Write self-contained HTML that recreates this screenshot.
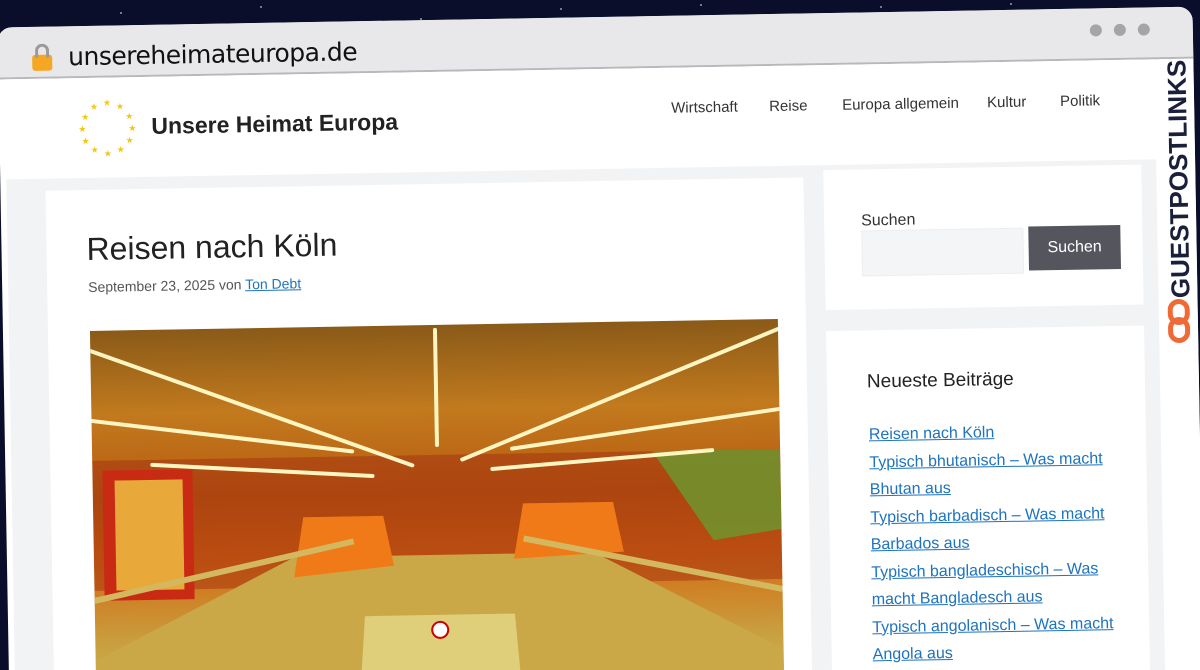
<!DOCTYPE html>
<html><head><meta charset="utf-8"><style>
html,body{margin:0;padding:0;width:1200px;height:670px;overflow:hidden;background:#0a0e2a;font-family:"Liberation Sans",sans-serif}
#root{position:relative;width:1200px;height:670px;overflow:hidden}
.star{position:absolute;width:2px;height:2px;background:#cfd6ff;border-radius:50%;opacity:.7}
#w{position:absolute;left:3px;top:17px;width:1195px;height:680px;transform:rotate(-1deg);transform-origin:600px 313px;background:#fff;border-radius:14px;overflow:hidden}
.abs{position:absolute}
a{color:#1e73be}
</style></head><body><div id="root">
<div class="star" style="left:120px;top:12px"></div><div class="star" style="left:260px;top:6px"></div><div class="star" style="left:420px;top:18px"></div><div class="star" style="left:560px;top:8px"></div><div class="star" style="left:700px;top:4px"></div><div class="star" style="left:880px;top:6px"></div><div class="star" style="left:1010px;top:3px"></div><div class="star" style="left:40px;top:30px"></div><div class="star" style="left:340px;top:22px"></div>
<div id="w">
 <div class="abs" style="left:0;top:0;width:1195px;height:50px;background:#e8e8ea;border-bottom:2px solid #b8b8bc"></div>
 <div class="abs" style="left:34px;top:28px;width:20px;height:16px;background:#f5a623;border-radius:3px"></div>
 <div class="abs" style="left:37px;top:17px;width:14px;height:14px;border:3px solid #9a9a9a;border-bottom:none;border-radius:8px 8px 0 0;box-sizing:border-box"></div>
 <div class="abs" style="left:70px;top:16px;font-size:25px;color:#111;font-family:'DejaVu Sans',sans-serif;letter-spacing:-.5px">unsereheimateuropa.de</div>
 <div class="abs" style="left:1092px;top:16px;width:12px;height:12px;border-radius:50%;background:#a5a5a8"></div>
 <div class="abs" style="left:1116px;top:16px;width:12px;height:12px;border-radius:50%;background:#a5a5a8"></div>
 <div class="abs" style="left:1140px;top:16px;width:12px;height:12px;border-radius:50%;background:#a5a5a8"></div>
 <div class="abs" style="left:6px;top:52px;width:1150px;height:700px;background:#f2f3f5"></div>
 <div class="abs" style="left:6px;top:52px;width:1150px;height:100px;background:#fff"></div>
 <svg class="abs" style="left:78px;top:72px" width="60" height="60" viewBox="0 0 60 60">
  <g fill="#f3c814" font-size="9" text-anchor="middle"><text x="30" y="8">★</text><text x="43" y="12">★</text><text x="52" y="22">★</text><text x="55" y="34">★</text><text x="52" y="46">★</text><text x="43" y="55">★</text><text x="30" y="59">★</text><text x="17" y="55">★</text><text x="8" y="46">★</text><text x="5" y="34">★</text><text x="8" y="22">★</text><text x="17" y="12">★</text></g></svg>
 <div class="abs" style="left:152px;top:88px;font-size:23px;font-weight:bold;color:#222">Unsere Heimat Europa</div>
 <div class="abs" style="left:672px;top:84px;font-size:15px;color:#333">Wirtschaft</div>
 <div class="abs" style="left:770px;top:84px;font-size:15px;color:#333">Reise</div>
 <div class="abs" style="left:843px;top:84px;font-size:15px;color:#333">Europa allgemein</div>
 <div class="abs" style="left:988px;top:84px;font-size:15px;color:#333">Kultur</div>
 <div class="abs" style="left:1061px;top:84px;font-size:15px;color:#333">Politik</div>
 <div class="abs" style="left:45px;top:164px;width:758px;height:600px;background:#fff"></div>
 <div class="abs" style="left:85px;top:205px;font-size:32px;color:#222">Reisen nach Köln</div>
 <div class="abs" style="left:86px;top:253px;font-size:14px;color:#555">September 23, 2025 von <a href="#">Ton Debt</a></div>
 <div class="abs" style="left:87px;top:305px;width:688px;height:420px;overflow:hidden;background:linear-gradient(180deg,#8a5a18 0%,#c27a1e 20%,#b85a10 40%,#d46a12 55%,#c8a040 75%,#d9bf5a 100%)">
  <svg width="688" height="420" viewBox="0 0 688 420">
   <polygon points="0,130 688,130 688,260 0,260" fill="#a13010" opacity=".5"/>
   <polygon points="200,230 500,230 688,330 688,420 0,420 0,330" fill="#caa848"/>
   <polygon points="270,290 420,290 430,420 260,420" fill="#e0cf7a"/>
   <polygon points="300,380 390,380 390,420 300,420" fill="#6aa838"/>
   <rect x="10" y="140" width="90" height="130" fill="#c82a14"/><rect x="22" y="150" width="68" height="110" fill="#e8a83a"/>
   <polygon points="210,190 290,190 300,240 200,250" fill="#f07a18"/><polygon points="430,180 520,180 530,230 420,235" fill="#f07a18"/>
   <polygon points="560,130 688,130 688,210 620,220" fill="#6a9a30" opacity=".8"/>
   <g stroke="#fff5c0" stroke-width="4" stroke-linecap="round">
    <line x1="0" y1="20" x2="320" y2="140"/><line x1="688" y1="10" x2="370" y2="135"/>
    <line x1="0" y1="90" x2="260" y2="125"/><line x1="688" y1="90" x2="420" y2="125"/>
    <line x1="345" y1="5" x2="345" y2="120"/>
    <line x1="60" y1="135" x2="280" y2="150"/><line x1="620" y1="130" x2="400" y2="145"/>
   </g>
   <g stroke="#d4b860" stroke-width="6"><line x1="0" y1="270" x2="260" y2="215"/><line x1="688" y1="270" x2="430" y2="215"/></g>
   <circle cx="345" cy="305" r="8" fill="#fff" stroke="#c00" stroke-width="2"/>
  </svg>
 </div>
 <div class="abs" style="left:823px;top:157px;width:318px;height:140px;background:#fff"></div>
 <div class="abs" style="left:860px;top:200px;font-size:16px;color:#333">Suchen</div>
 <div class="abs" style="left:860px;top:218px;width:160px;height:44px;background:#f4f5f6;border:1px solid #eee"></div>
 <div class="abs" style="left:1027px;top:217px;width:92px;height:44px;background:#55555e;color:#fff;font-size:16px;line-height:44px;text-align:center">Suchen</div>
 <div class="abs" style="left:823px;top:318px;width:318px;height:420px;background:#fff"></div>
 <div class="abs" style="left:863px;top:359px;font-size:19px;color:#222">Neueste Beiträge</div>
 <div class="abs" style="left:864px;top:409px;width:260px;font-size:16px;line-height:27.5px">
  <a href="#">Reisen nach Köln</a><br><a href="#">Typisch bhutanisch – Was macht Bhutan aus</a><br><a href="#">Typisch barbadisch – Was macht Barbados aus</a><br><a href="#">Typisch bangladeschisch – Was macht Bangladesch aus</a><br><a href="#">Typisch angolanisch – Was macht Angola aus</a>
 </div>
 <div class="abs" style="left:1160px;top:52px;width:35px;height:700px;background:#fff"></div>
 <div class="abs" style="left:1053px;top:155px;width:250px;height:34px;transform:rotate(-90deg);font-size:26px;font-weight:bold;color:#1a1f3a;line-height:34px;text-align:center">GUESTPOSTLINKS</div>
 <div class="abs" style="left:1165px;top:292px;width:22px;height:26px;border:5px solid #f06a35;border-radius:12px;box-sizing:border-box"></div>
 <div class="abs" style="left:1165px;top:310px;width:22px;height:26px;border:5px solid #f06a35;border-radius:12px;box-sizing:border-box"></div>
</div>
</div></body></html>
